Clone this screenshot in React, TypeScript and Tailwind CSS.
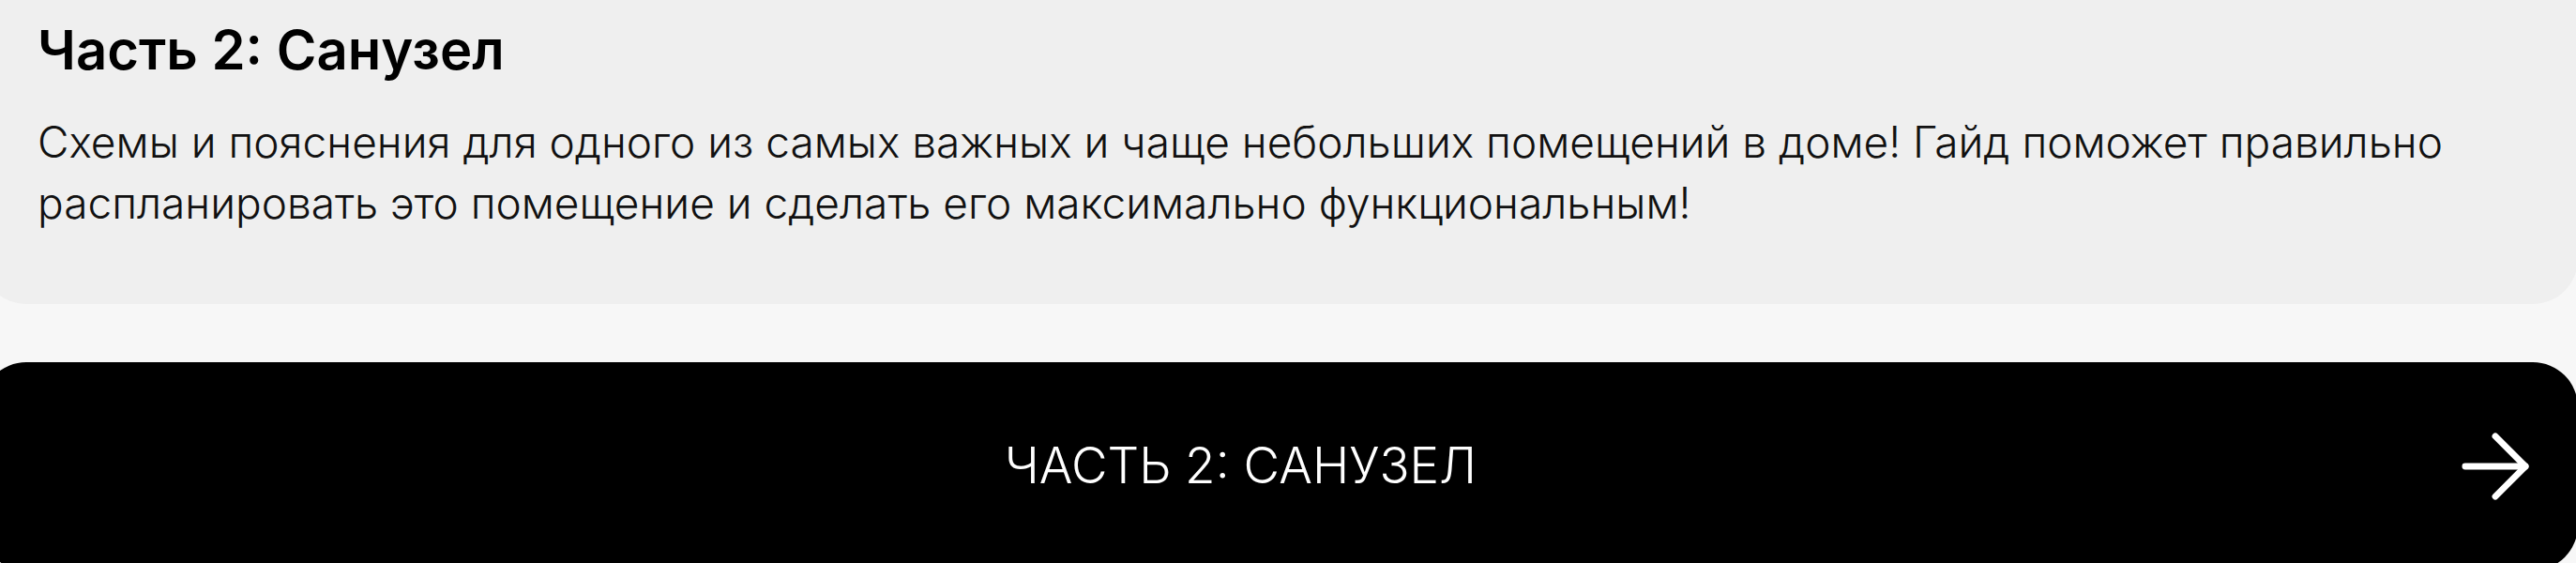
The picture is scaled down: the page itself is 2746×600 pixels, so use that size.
import React from "react";
import { ArrowRight } from "lucide-react";

export default function App() {
  return (
    <div className="w-full h-[600px] overflow-hidden bg-[#f7f7f7] font-['Inter','Noto_Sans',sans-serif]">
      {/* Guide description card */}
      <section className="ml-[-20px] w-[2768px] rounded-b-[48px] bg-[#efefef] pl-[60px] pr-[60px] pt-[18px] pb-[75px]">
        <h2 className="text-[58px] leading-[70px] font-semibold text-black">
          Часть 2: Санузел
        </h2>
        <p className="mt-[31px] text-[46px] leading-[65px] font-light text-[#111]">
          Схемы и пояснения для одного из самых важных и чаще небольших помещений в доме! Гайд поможет правильно
          <br />
          распланировать это помещение и сделать его максимально функциональным!
        </p>
      </section>

      {/* Call-to-action button */}
      <button className="mt-[62px] ml-[-20px] w-[2768px] h-[222px] rounded-[48px] bg-black flex items-center pl-[60px] pr-[33px] text-white">
        <span className="flex-1 text-center text-[53px] font-light uppercase">
          Часть 2: Санузел
        </span>
        <ArrowRight className="w-[110px] h-[110px] shrink-0" strokeWidth={1.5} />
      </button>
    </div>
  );
}
